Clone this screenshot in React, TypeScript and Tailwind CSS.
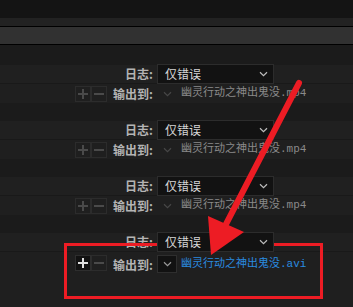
import React from 'react';

const cjk = { fontFamily: '"Noto Sans CJK SC", "Noto Sans", sans-serif' };
const mono = { fontFamily: '"Liberation Mono", "Noto Sans CJK SC", monospace' };

function Chevron({ color }: { color: string }) {
  return (
    <svg width="9" height="6" viewBox="0 0 9 6" fill="none">
      <path d="M1 1.2 L4.5 4.6 L8 1.2" stroke={color} strokeWidth="1.2" />
    </svg>
  );
}

function Group({ active = false, last = false }: { active?: boolean; last?: boolean }) {
  return (
    <div>
      <div className="h-[18px] bg-[#1b1b1b]" />
      <div className="h-[18px] bg-[#202020] flex items-center">
        <div className="w-[153px] text-right text-[12px] font-bold text-[#b4b4b4] leading-none" style={cjk}>
          日志:
        </div>
        <div className="relative z-10 ml-[4px] w-[117px] h-[20px] bg-[#121212] border border-[#2c2c2c] flex items-center justify-between pl-[7px] pr-[5px]">
          <span className="text-[12px] text-[#d6d6d6] leading-none" style={cjk}>仅错误</span>
          <Chevron color="#bdbdbd" />
        </div>
      </div>
      <div className="h-px bg-[#191919]" />
      <div className={`${last ? 'h-[55px] items-start pt-[3px]' : 'h-[19px] items-center'} bg-[#1f1f1f] flex`}>
        <div className="ml-[75px] flex">
          <div className={`w-[16px] h-[16px] border flex items-center justify-center ${active ? 'bg-[#121212] border-[#2e2e2e]' : 'border-[#2c2c2c]'}`}>
            <svg width="10" height="10" viewBox="0 0 10 10">
              <path d="M5 0 V10 M0 5 H10" stroke={active ? '#e0e0e0' : '#4a4a4a'} strokeWidth="2" />
            </svg>
          </div>
          <div className="w-[16px] h-[16px] border border-[#2c2c2c] flex items-center justify-center">
            <svg width="10" height="10" viewBox="0 0 10 10">
              <path d="M0 5 H10" stroke="#4a4a4a" strokeWidth="2" />
            </svg>
          </div>
        </div>
        <div className={`w-[46px] text-right text-[12px] font-bold text-[#b4b4b4] leading-none ${last ? 'mt-[4px]' : ''}`} style={cjk}>
          输出到:
        </div>
        <div className={`ml-[4px] w-[20px] h-[18px] flex items-center justify-center ${active ? 'bg-[#121212] border border-[#2e2e2e]' : ''}`}>
          <Chevron color={active ? '#9a9a9a' : '#474747'} />
        </div>
        <div className={`ml-[4px] text-[11px] leading-none ${active ? 'text-[#2a8be0] mt-[4px]' : 'text-[#8a8a8a]'}`} style={mono}>
          幽灵行动之神出鬼没.{active ? 'avi' : 'mp4'}
        </div>
      </div>
    </div>
  );
}

export default function App() {
  return (
    <div className="relative w-[353px] h-[307px] overflow-hidden bg-[#1b1b1b]">
      <div className="h-[18px] bg-[#141414]" />
      <div className="h-[8px] bg-[#222222]" />
      <div className="h-px bg-black" />
      <div className="h-[17px] bg-[#313131]" />
      <div className="h-px bg-black" />
      <div className="h-[2px] bg-[#1b1b1b]" />
      <Group />
      <Group />
      <Group />
      <Group active last />

      <div className="absolute left-[64px] top-[243px] w-[259px] h-[56px] border-[3px] border-[#ed1c24] z-0 pointer-events-none" />

      <svg className="absolute left-0 top-0 z-20 pointer-events-none" width="353" height="307" viewBox="0 0 353 307">
        <line x1="299" y1="83" x2="224" y2="228" stroke="#ed1c24" strokeWidth="6" strokeLinecap="round" />
        <polygon points="211,255 208,216 244,232" fill="#ed1c24" />
      </svg>
    </div>
  );
}
